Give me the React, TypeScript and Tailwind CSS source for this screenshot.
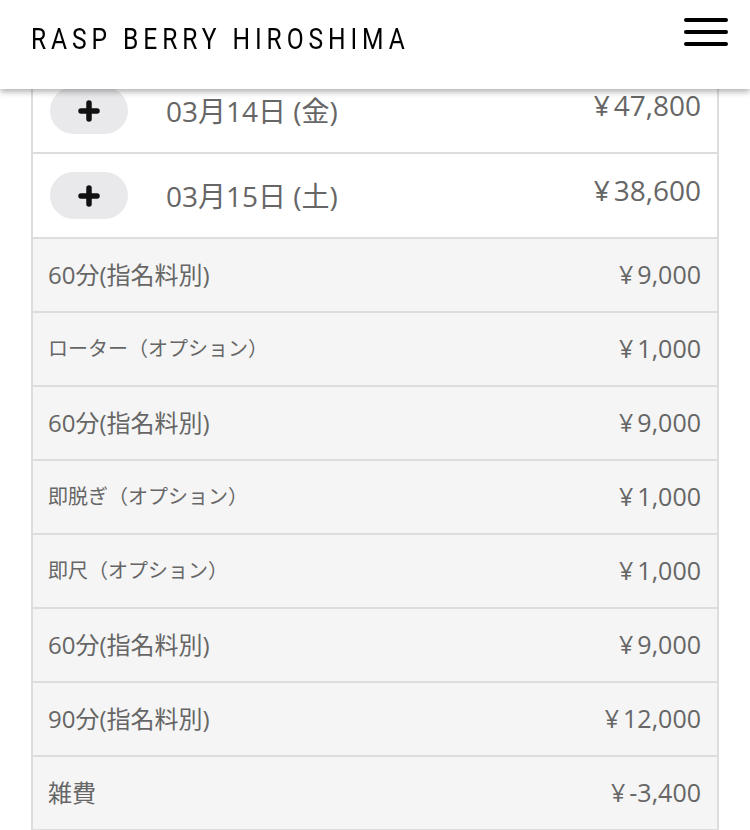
import React from "react";

type Item = { label: string; price: string; small?: boolean };

const days = [
  { date: "03月14日 (金)", total: "47,800" },
  { date: "03月15日 (土)", total: "38,600" },
];

const items: Item[] = [
  { label: "60分(指名料別)", price: "9,000" },
  { label: "ローター（オプション）", price: "1,000", small: true },
  { label: "60分(指名料別)", price: "9,000" },
  { label: "即脱ぎ（オプション）", price: "1,000", small: true },
  { label: "即尺（オプション）", price: "1,000", small: true },
  { label: "60分(指名料別)", price: "9,000" },
  { label: "90分(指名料別)", price: "12,000" },
  { label: "雑費", price: "-3,400" },
];

const font = {
  fontFamily: '"Open Sans", "Noto Sans CJK JP", sans-serif',
};

function Yen({ value }: { value: string }) {
  return (
    <span>
      <span className="mr-[4px]">¥</span>
      {value}
    </span>
  );
}

function PlusButton() {
  return (
    <button className="flex h-[47px] w-[78px] shrink-0 items-center justify-center rounded-full bg-[#e9e9eb]">
      <svg width="22" height="22" viewBox="0 0 22 22">
        <path
          d="M11 3v16M3 11h16"
          stroke="#111"
          strokeWidth="5.5"
          strokeLinecap="round"
        />
      </svg>
    </button>
  );
}

export default function App() {
  return (
    <div className="min-h-screen bg-white" style={font}>
      <header className="fixed inset-x-0 top-0 z-10 flex h-[89px] items-start justify-between bg-white pl-[31px] pr-[22px] shadow-[0_3px_6px_rgba(0,0,0,0.3)]">
        <h1
          className="mt-[22px] origin-left scale-x-[0.82] whitespace-nowrap text-[30px] leading-[34px] tracking-[6px] text-black"
          style={{ fontFamily: 'Roboto, "DejaVu Sans", sans-serif' }}
        >
          RASP BERRY HIROSHIMA
        </h1>
        <div className="mt-[18px] flex w-[44px] flex-col gap-[8px]">
          <span className="h-[4px] rounded-full bg-black" />
          <span className="h-[4px] rounded-full bg-black" />
          <span className="h-[4px] rounded-full bg-black" />
        </div>
      </header>

      <main className="px-[31px] pt-[67px]">
        <div className="border-x-2 border-t-2 border-[#dddddd]">
          {days.map((d, i) => (
            <div
              key={i}
              className="flex h-[85px] items-center border-b-2 border-[#dddddd] bg-white pl-[17px] pr-[16px]"
            >
              <PlusButton />
              <span className="ml-[38px] text-[28px] text-[#666]">{d.date}</span>
              <span className="ml-auto mb-[12px] text-[28px] text-[#666]">
                <Yen value={d.total} />
              </span>
            </div>
          ))}
          {items.map((it, i) => (
            <div
              key={i}
              className="flex h-[74px] items-center justify-between border-b-2 border-[#dddddd] bg-[#f5f5f5] pl-[15px] pr-[16px]"
            >
              <span className={it.small ? "text-[20px] text-[#666]" : "text-[24px] text-[#666]"}>
                {it.label}
              </span>
              <span className="text-[25px] text-[#666]">
                <Yen value={it.price} />
              </span>
            </div>
          ))}
        </div>
      </main>
    </div>
  );
}
